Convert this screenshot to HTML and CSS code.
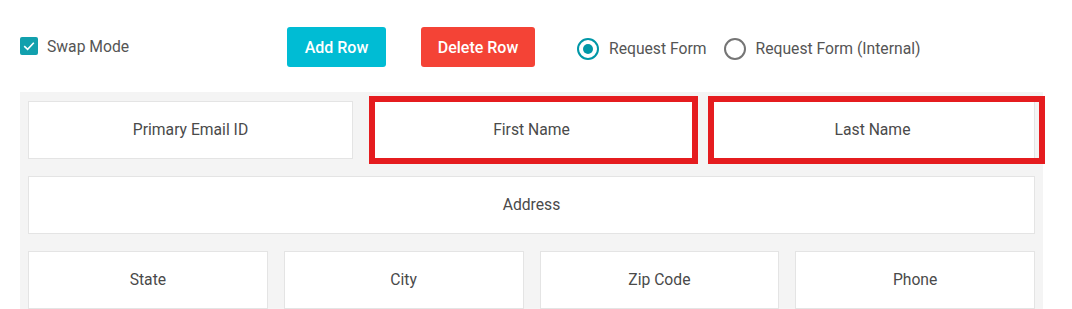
FILE: index.html
```html
<!DOCTYPE html>
<html lang="en">
<head>
    <meta charset="UTF-8">
    <meta name="viewport" content="width=device-width, initial-scale=1.0">
    <title>Form Builder</title>
    <link rel="stylesheet" href="styles.css">
</head>
<body>

    <!-- 상단 도구 모음 -->
    <div class="toolbar">
        <label class="swap">
            <span class="check-box">
                <svg width="18" height="18" viewBox="0 0 18 18">
                    <rect width="18" height="18" rx="2" fill="#12a0ad"/>
                    <path d="M4.2 9.2 L7.6 12.4 L13.8 5.8" fill="none" stroke="#fff" stroke-width="1.6"/>
                </svg>
            </span>
            Swap Mode
        </label>
        <button class="btn btn-add">Add Row</button>
        <button class="btn btn-delete">Delete Row</button>
        <div class="radios">
            <label class="radio checked"><span class="dot"></span>Request Form</label>
            <label class="radio"><span class="dot"></span>Request Form (Internal)</label>
        </div>
    </div>

    <!-- 폼 레이아웃 -->
    <div class="board">
        <div class="row cols-3">
            <div class="cell">Primary Email ID</div>
            <div class="cell mark mark-first">First Name</div>
            <div class="cell mark mark-last">Last Name</div>
        </div>
        <div class="row">
            <div class="cell">Address</div>
        </div>
        <div class="row cols-4">
            <div class="cell">State</div>
            <div class="cell">City</div>
            <div class="cell">Zip Code</div>
            <div class="cell">Phone</div>
        </div>
    </div>

</body>
</html>
```

FILE: styles.css
```css
/* 기본 스타일링 */
body {
    font-family: Roboto, "Liberation Sans", Arial, sans-serif;
    margin: 0;
    padding: 0;
    background-color: #fff;
    color: #4a4a4a;
    font-size: 15.7px;
}

.toolbar {
    display: flex;
    align-items: center;
    height: 40px;
    padding: 27px 20px 0;
}

.swap {
    display: flex;
    align-items: center;
    width: 267px;
    padding-bottom: 2px;
    color: #555;
}

.check-box {
    display: flex;
    margin-right: 9px;
}

.btn {
    height: 40px;
    border: none;
    border-radius: 3px;
    color: #fff;
    font-family: inherit;
    font-size: 16px;
    font-weight: 500;
    padding: 0;
}

.btn-add {
    width: 99px;
    background-color: #00bcd4;
}

.btn-delete {
    width: 114px;
    margin-left: 35px;
    background-color: #f44336;
}

.radios {
    display: flex;
    align-items: center;
    margin-left: 42px;
    padding-top: 3px;
}

.radio {
    display: flex;
    align-items: center;
    margin-right: 17px;
    color: #555;
}

.dot {
    box-sizing: border-box;
    width: 22px;
    height: 22px;
    border: 2px solid #757575;
    border-radius: 50%;
    margin-right: 10px;
    display: flex;
    align-items: center;
    justify-content: center;
}

.radio.checked .dot {
    border-color: #0097a7;
}

.radio.checked .dot::after {
    content: "";
    width: 10px;
    height: 10px;
    border-radius: 50%;
    background-color: #0097a7;
}

/* 스타일링: 폼 영역 */
.board {
    width: 1023px;
    box-sizing: border-box;
    margin: 25px 0 0 20px;
    padding: 9px 8px 8px;
    background-color: #f4f4f4;
    display: flex;
    flex-direction: column;
    gap: 17px;
}

.row {
    display: grid;
    grid-template-columns: 1fr;
    gap: 16px;
}

.row.cols-3 {
    grid-template-columns: repeat(3, 1fr);
}

.row.cols-4 {
    grid-template-columns: repeat(4, 1fr);
}

.cell {
    height: 58px;
    box-sizing: border-box;
    padding-bottom: 2px;
    border: 1px solid #e4e4e4;
    background-color: #fff;
    display: flex;
    align-items: center;
    justify-content: center;
    position: relative;
}

/* 빨간 강조 표시 */
.mark::after {
    content: "";
    position: absolute;
    border: 6px solid #e51c1f;
}

.mark-first::after {
    top: -6px;
    left: -1px;
    right: -5px;
    bottom: -6px;
}

.mark-last::after {
    top: -6px;
    left: -3px;
    right: -11px;
    bottom: -6px;
}
```
